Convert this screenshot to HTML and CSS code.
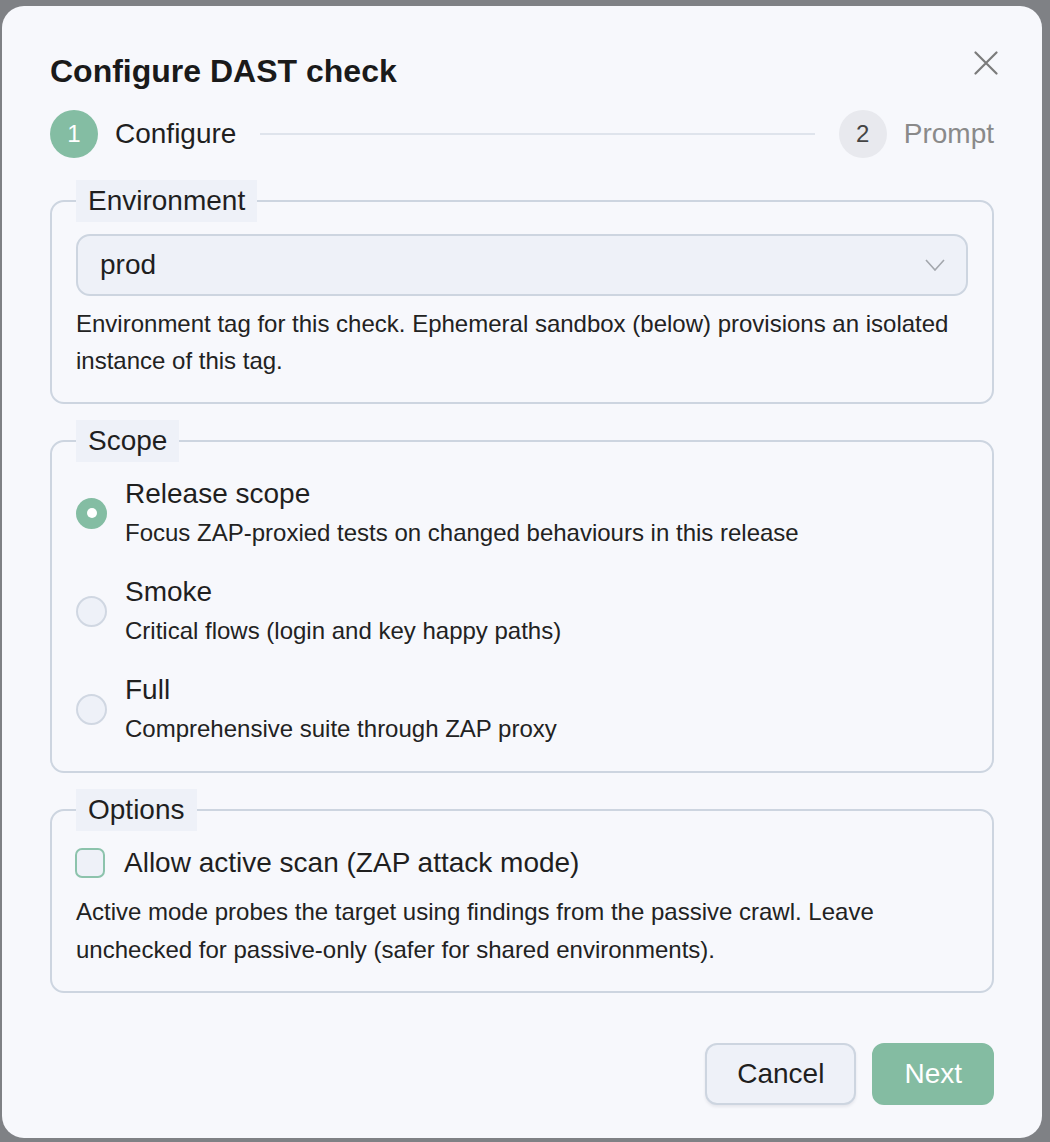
FILE: index.html
```html
<!DOCTYPE html>
<html lang="en">
<head>
    <meta charset="UTF-8">
    <meta name="viewport" content="width=device-width, initial-scale=1.0">
    <title>Configure DAST check</title>
    <link rel="stylesheet" href="styles.css">
</head>
<body>
    <div class="dialog">
        <button class="close-btn" aria-label="Close">
            <svg width="24" height="24" viewBox="0 0 24 24" fill="none" stroke="#7b7b7b" stroke-width="2.2" stroke-linecap="round">
                <path d="M1.5 1.5 L22.5 22.5 M22.5 1.5 L1.5 22.5"/>
            </svg>
        </button>

        <h2 class="dialog-title">Configure DAST check</h2>

        <div class="stepper">
            <div class="step active">
                <span class="step-num">1</span>
                <span class="step-label">Configure</span>
            </div>
            <div class="step-line"></div>
            <div class="step">
                <span class="step-num">2</span>
                <span class="step-label">Prompt</span>
            </div>
        </div>

        <fieldset class="group">
            <legend>Environment</legend>
            <div class="select">
                <span>prod</span>
                <svg width="20" height="12" viewBox="0 0 20 12" fill="none" stroke="#a3a7ad" stroke-width="1.6">
                    <path d="M1 1 L10 11 L19 1"/>
                </svg>
            </div>
            <p class="help">Environment tag for this check. Ephemeral sandbox (below) provisions an isolated instance of this tag.</p>
        </fieldset>

        <fieldset class="group">
            <legend>Scope</legend>
            <div class="options">
                <div class="option">
                    <span class="radio checked"></span>
                    <div>
                        <div class="option-title">Release scope</div>
                        <div class="option-desc">Focus ZAP-proxied tests on changed behaviours in this release</div>
                    </div>
                </div>
                <div class="option">
                    <span class="radio"></span>
                    <div>
                        <div class="option-title">Smoke</div>
                        <div class="option-desc">Critical flows (login and key happy paths)</div>
                    </div>
                </div>
                <div class="option">
                    <span class="radio"></span>
                    <div>
                        <div class="option-title">Full</div>
                        <div class="option-desc">Comprehensive suite through ZAP proxy</div>
                    </div>
                </div>
            </div>
        </fieldset>

        <fieldset class="group">
            <legend>Options</legend>
            <div class="check">
                <span class="box"></span>
                <span>Allow active scan (ZAP attack mode)</span>
            </div>
            <p class="help help-tight">Active mode probes the target using findings from the passive crawl. Leave unchecked for passive-only (safer for shared environments).</p>
        </fieldset>

        <div class="footer">
            <button class="btn btn-secondary">Cancel</button>
            <button class="btn btn-primary">Next</button>
        </div>
    </div>
</body>
</html>
```

FILE: styles.css
```css
body {
    margin: 0;
    background-color: #7f8185;
    font-family: "Liberation Sans", Arial, sans-serif;
    color: #1f1f1f;
}
.dialog {
    position: relative;
    width: 1040px;
    box-sizing: border-box;
    margin: 6px 0 0 2px;
    padding: 47px 48px 33px;
    background: #f7f8fc;
    border-radius: 22px;
}
.close-btn {
    position: absolute;
    top: 39px;
    right: 38px;
    width: 36px;
    height: 36px;
    padding: 0;
    border: none;
    background: none;
    display: flex;
    align-items: center;
    justify-content: center;
    cursor: pointer;
}
.dialog-title {
    margin: 0;
    font-size: 32px;
    line-height: 36px;
    font-weight: 700;
    color: #1a1a1a;
}
.stepper {
    display: flex;
    align-items: center;
    margin: 21px 0 22px;
}
.step {
    display: flex;
    align-items: center;
    gap: 17px;
}
.step-num {
    width: 48px;
    height: 48px;
    border-radius: 50%;
    display: flex;
    align-items: center;
    justify-content: center;
    font-size: 24px;
    background: #e8e9ee;
    color: #444;
}
.step-label {
    font-size: 28px;
    color: #8a8a8a;
}
.step.active .step-num {
    background: #84bda3;
    color: #fff;
}
.step.active .step-label {
    color: #1f1f1f;
}
.step-line {
    flex: 1;
    height: 2px;
    background: #dfe4ec;
    margin: 0 24px;
}
.group {
    margin: 0 0 16px;
    padding: 12px 24px 23px;
    border: 2px solid #cdd5e0;
    border-radius: 14px;
    min-width: 0;
}
.group:last-of-type {
    margin-bottom: 0;
}
.group legend {
    padding: 0 12px;
    background: #eef1f8;
    font-size: 28px;
    line-height: 42px;
}
.select {
    display: flex;
    align-items: center;
    justify-content: space-between;
    height: 62px;
    box-sizing: border-box;
    padding: 0 21px 0 22px;
    border: 2px solid #cdd5e0;
    border-radius: 14px;
    background: #eef1f8;
    font-size: 28px;
}
.help {
    margin: 9px 0 0;
    font-size: 24px;
    line-height: 1.55;
    color: #222;
}
.help-tight {
    margin-top: 10px;
}
.options {
    display: flex;
    flex-direction: column;
    gap: 20px;
}
.option {
    display: flex;
    align-items: center;
    gap: 18px;
}
.radio {
    flex: none;
    width: 31px;
    height: 31px;
    box-sizing: border-box;
    border-radius: 50%;
    border: 2px solid #d0d7e2;
    background: #eef1f8;
}
.radio.checked {
    display: flex;
    align-items: center;
    justify-content: center;
    background: #84bda3;
    border-color: #84bda3;
}
.radio.checked::after {
    content: "";
    width: 10px;
    height: 10px;
    border-radius: 50%;
    background: #fff;
}
.option-title {
    font-size: 28px;
    line-height: 40px;
}
.option-desc {
    font-size: 24px;
    line-height: 38px;
    color: #222;
}
.check {
    display: flex;
    align-items: center;
    gap: 19px;
    font-size: 28px;
    line-height: 40px;
}
.box {
    flex: none;
    width: 30px;
    height: 30px;
    box-sizing: border-box;
    border: 2px solid #8cc3ac;
    border-radius: 7px;
    background: #eef1f8;
    margin-left: -1px;
}
.footer {
    display: flex;
    justify-content: flex-end;
    gap: 16px;
    margin-top: 50px;
}
.btn {
    height: 62px;
    padding: 0 30px;
    border-radius: 12px;
    border: 2px solid;
    font-family: inherit;
    font-size: 28px;
    cursor: pointer;
}
.btn-secondary {
    background: #eef1f8;
    border-color: #cdd5e0;
    color: #1f1f1f;
    box-shadow: 0 2px 3px rgba(20, 30, 50, 0.08);
}
.btn-primary {
    background: #84bca2;
    border-color: #84bca2;
    color: #fff;
}
```
